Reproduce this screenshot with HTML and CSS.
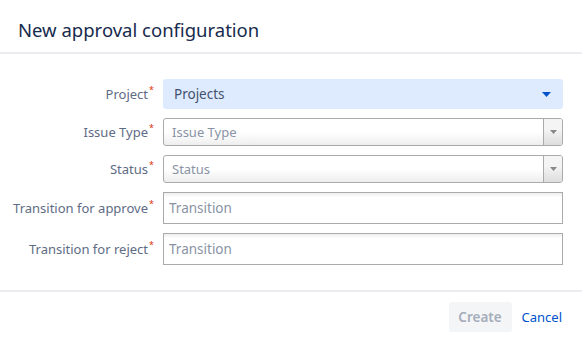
FILE: index.html
```html
<!DOCTYPE html>
<html lang="en">
<head>
    <meta charset="UTF-8">
    <title>New approval configuration</title>
    <link rel="stylesheet" href="styles.css">
</head>
<body>

    <div class="dialog">
        <div class="dialog-header">
            <h2>New approval configuration</h2>
        </div>

        <form class="dialog-body">
            <div class="row">
                <label>Project<span class="req">*</span></label>
                <div class="picker">
                    <span>Projects</span>
                    <svg width="9" height="5" viewBox="0 0 9 5"><path d="M0 0h9L4.5 5z" fill="#0052cc"/></svg>
                </div>
            </div>

            <div class="row">
                <label>Issue Type<span class="req">*</span></label>
                <div class="select">
                    <span>Issue Type</span>
                    <b class="arrow"><svg width="7" height="4" viewBox="0 0 7 4"><path d="M0 0h7L3.5 4z" fill="#888"/></svg></b>
                </div>
            </div>

            <div class="row">
                <label>Status<span class="req">*</span></label>
                <div class="select">
                    <span>Status</span>
                    <b class="arrow"><svg width="7" height="4" viewBox="0 0 7 4"><path d="M0 0h7L3.5 4z" fill="#888"/></svg></b>
                </div>
            </div>

            <div class="row">
                <label>Transition for approve<span class="req">*</span></label>
                <input type="text" placeholder="Transition">
            </div>

            <div class="row">
                <label>Transition for reject<span class="req">*</span></label>
                <input type="text" placeholder="Transition">
            </div>
        </form>

        <div class="dialog-footer">
            <button type="button" disabled>Create</button>
            <a href="#">Cancel</a>
        </div>
    </div>

</body>
</html>
```

FILE: styles.css
```css
* {
    margin: 0;
    padding: 0;
    box-sizing: border-box;
}

body {
    font-family: "Noto Sans", "Open Sans", sans-serif;
    background-color: #fff;
    color: #172b4d;
}

.dialog {
    width: 582px;
}

/* Header */
.dialog-header {
    height: 54px;
    padding: 6px 18px 0;
    display: flex;
    align-items: center;
    border-bottom: 2px solid #ebecf0;
}

h2 {
    font-size: 18.5px;
    font-weight: normal;
    color: #172b4d;
}

/* Form */
.dialog-body {
    padding: 25px 0 25px;
    display: flex;
    flex-direction: column;
    gap: 9px;
}

.row {
    display: grid;
    grid-template-columns: 155px 400px;
    column-gap: 8px;
    align-items: center;
}

label {
    text-align: right;
    font-size: 13px;
    color: #5e6c84;
    white-space: nowrap;
}

.req {
    color: #de350b;
    font-size: 9px;
    position: relative;
    top: -6px;
    margin-left: 1px;
    margin-right: 1px;
}

.picker {
    height: 30px;
    background-color: #deebff;
    border-radius: 3px;
    padding: 0 12px 0 11px;
    display: flex;
    align-items: center;
    justify-content: space-between;
    font-size: 13.5px;
    color: #42526e;
}

.select {
    height: 28px;
    border: 1px solid #aaa;
    border-radius: 3px;
    background: linear-gradient(to top, #eee 0%, #fff 50%);
    display: flex;
    align-items: center;
    font-size: 13px;
    color: #8993a4;
    overflow: hidden;
}

.select span {
    flex: 1;
    padding-left: 8px;
}

.arrow {
    width: 19px;
    height: 100%;
    border-left: 1px solid #aaa;
    background: linear-gradient(to top, #ddd 0%, #f4f4f4 60%);
    display: flex;
    align-items: center;
    justify-content: center;
}

input {
    height: 32px;
    border: 1px solid #aaa;
    background: linear-gradient(to bottom, #eee 0%, #fff 15%);
    padding: 0 5px;
    font-family: inherit;
    font-size: 13.5px;
    color: #172b4d;
    outline: none;
}

input::placeholder {
    color: #8993a4;
}

/* Footer */
.dialog-footer {
    border-top: 2px solid #ebecf0;
    padding: 10px 20px 0 0;
    display: flex;
    justify-content: flex-end;
    align-items: center;
    gap: 10px;
}

button {
    width: 63px;
    height: 30px;
    border: none;
    border-radius: 3px;
    background-color: #f4f5f7;
    color: #a5adba;
    font-family: inherit;
    font-size: 13.5px;
    font-weight: 600;
}

.dialog-footer a {
    color: #0052cc;
    font-size: 13px;
    text-decoration: none;
}
```
